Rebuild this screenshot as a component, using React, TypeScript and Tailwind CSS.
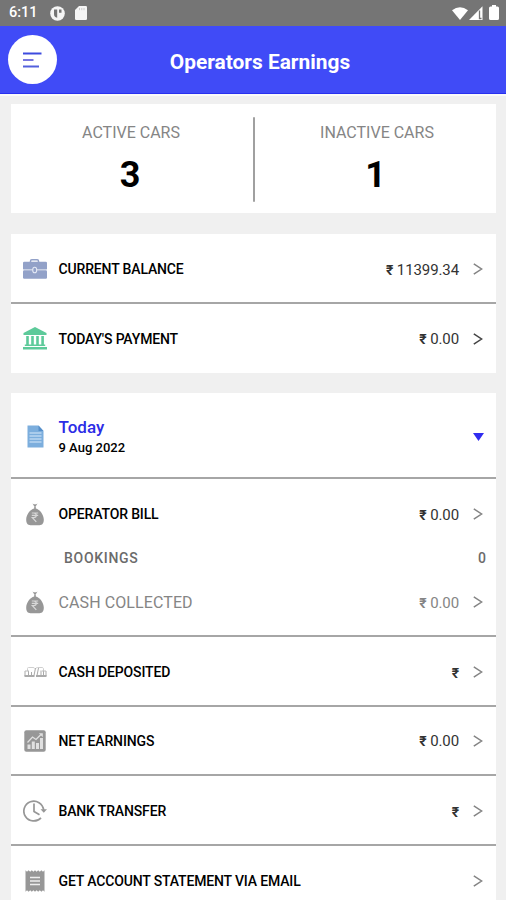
import type { ReactNode } from "react";

function Chevron({ dark = false }: { dark?: boolean }) {
  return (
    <svg
      className={dark ? "ml-[14px] h-3 w-[10px] text-[#444]" : "ml-[14px] h-3 w-[10px] text-[#848484]"}
      viewBox="0 0 10 12"
      fill="none"
      stroke="currentColor"
      strokeWidth="1.5"
    >
      <path d="M0.8 0.8 8.6 6 0.8 11.2" />
    </svg>
  );
}

function Briefcase() {
  return (
    <svg className="h-5 w-6" viewBox="0 0 24 20" fill="#92a1c8">
      <path d="M7.5 3.5V2.2Q7.5.8 8.8.8h5.4q1.3 0 1.3 1.4v1.3" fill="none" stroke="#92a1c8" strokeWidth="1.5" />
      <rect y="2.8" width="24" height="7.8" rx="1.2" />
      <rect y="11.3" width="24" height="8.5" rx="1.2" />
      <ellipse cx="11.7" cy="11" rx="2" ry="2.8" fill="#92a1c8" stroke="#e4e9f5" strokeWidth="1.1" />
    </svg>
  );
}

function Bank() {
  return (
    <svg className="h-[23px] w-6" viewBox="0 0 24 23" fill="#5dca9a">
      <path d="M12 0 23.5 6v1.9H.5V6z" />
      <path d="M3.2 9h2.6v9H3.200zM8.200 9h2.600v9H8.200zM13.200 9h2.600v9h-2.600zM18.300 9h2.600v9h-2.600zM1.800 17.600h20.400V19H1.800zM0 20h24v2.600H0z" />
    </svg>
  );
}

function Doc() {
  return (
    <svg className="h-[23px] w-[17px]" viewBox="0 0 17 23">
      <path d="M.5.5h11l5 5.600v16.400H.5z" fill="#7caedd" />
      <path d="M11.500.5v5.600h5z" fill="#568fca" />
      <path d="M2.500 8h12M2.500 11h12M2.500 14h12M2.500 17h12" stroke="#b9d6f1" strokeWidth="1.300" />
    </svg>
  );
}

function MoneyBag() {
  return (
    <svg className="h-[23px] w-[18px]" viewBox="0 0 18 23" fill="#979797">
      <path d="M6.500.5 8.200 1.400 9 .9l.8.5 1.700-.9L9.700 3.600H8.300z" />
      <path d="M8.200 3.400h1.600v2c4 .9 8 6.200 8 11.200 0 4-1.500 5.700-4.300 5.700h-9C1.700 22.300.2 20.600.2 16.600.2 11.600 4.200 6.300 8.200 5.400z" />
      <path d="M5.800 10h6.400M5.800 12.400h6.400M6.300 10h1.300c3.600 0 3.600 4.600 0 4.600H6.300l4 4.200" fill="none" stroke="#d8d8d8" strokeWidth="1.200" />
    </svg>
  );
}

function Sofa() {
  return (
    <svg className="h-[11px] w-[23px]" viewBox="0 0 23 11" fill="none" stroke="#aaa" strokeWidth="1">
      <path d="M3.500 4V1.500q0-1 1-1h4.500q1.500 0 1.500 1M12 1.500q0-1 1.500-1h4.500q1 0 1.500 1V4" stroke="#cfcfcf" />
      <path d="M1 4v5M4.500 4v4.500M7.500 8.500V5M10 8.500 11.500 1M13 8.500 14.500 1M17 8.500V3.500M19.500 8.500V4M22 4v5" />
      <path d="M.5 9h10M12 9h10.500" strokeWidth="2.200" />
      <path d="M1 4h4M18 4h4" stroke="#bbb" />
    </svg>
  );
}

function Chart() {
  return (
    <svg className="h-[22px] w-[22px]" viewBox="0 0 22 22">
      <rect x=".3" y=".3" width="21.400" height="21.400" rx="2" fill="#979797" />
      <path d="M3.500 14.500h3V19h-3zM7.800 11.500h3V19h-3zM12 13h3v6h-3zM16 8h3v11h-3z" fill="#e0e0e0" />
      <path d="m3.500 12.500 5-5.500 3.500 2.500 5-5" fill="none" stroke="#e0e0e0" strokeWidth="1.300" />
      <path d="M14.800 3.200h4v4z" fill="#e0e0e0" />
    </svg>
  );
}

function Clock() {
  return (
    <svg className="h-[22px] w-6" viewBox="0 0 24 22" fill="none" stroke="#979797" strokeWidth="1.700">
      <path d="M20.600 10A9.900 9.900 0 1 0 18 17.800M11 3.500v8l5.500 3.200" />
      <path d="M17.500 9.200h6.500l-3.200 3.600z" fill="#979797" stroke="none" />
    </svg>
  );
}

function Receipt() {
  return (
    <svg className="h-[22px] w-5" viewBox="0 0 20 22">
      <path d="M.5.3 2 1.800 3.600.3l1.600 1.500L6.800.3l1.600 1.500L10 .3l1.600 1.500L13.200.3l1.600 1.500L16.400.3 18 1.800 19.500.3v21.400L18 20.200l-1.600 1.500-1.600-1.500-1.600 1.500-1.600-1.500-1.600 1.500-1.600-1.500-1.600 1.500-1.600-1.500-1.600 1.500L2 20.200.5 21.700z" fill="#979797" />
      <path d="M5 7.500h10M5 11h10M5 14.500h10" stroke="#eee" strokeWidth="1.500" />
    </svg>
  );
}

type RowProps = {
  icon: ReactNode;
  label: string;
  labelClass: string;
  amount?: string;
  rupee?: boolean;
  muted?: boolean;
  dark?: boolean;
  className: string;
};

function Row({ icon, label, labelClass, amount, rupee = true, muted, dark, className }: RowProps) {
  return (
    <div className={`flex items-center pl-3 pr-[13px] ${className}`}>
      <div className="flex w-6 shrink-0 justify-center">{icon}</div>
      <div className={`ml-[11.5px] flex-1 whitespace-nowrap ${labelClass}`}>{label}</div>
      <div className={`flex items-baseline pt-[1px] text-[15px] leading-5 ${muted ? "text-[#858585]" : "text-[#333]"}`}>
        {rupee && <span className="text-[14px] font-bold">₹</span>}
        {amount && <span className="ml-[3.5px] tracking-[-0.1px]">{amount}</span>}
      </div>
      <Chevron dark={dark} />
    </div>
  );
}

const line = "border-b-[2px] border-[#a6a6a6]";
const strong = "text-[14px] font-medium text-black leading-5 tracking-[-0.15px]";

export default function App() {
  return (
    <div className="flex h-[900px] w-[506px] flex-col overflow-hidden bg-[#f0f0f0] font-['Roboto','Noto_Sans',sans-serif]">
      <div className="flex h-[26px] shrink-0 items-center bg-[#757575] pl-[9px] pr-[7px] text-white">
        <span className="w-[41px] text-[14.5px] font-medium leading-5">6:11</span>
        <svg className="h-[15px] w-[15px]" viewBox="0 0 15 15">
          <circle cx="7.500" cy="7.500" r="7.300" fill="#f5f5f5" />
          <path d="M4 3.500h3.200v8.300C5 11.500 4 10 4 8zM9 3.500h2.500v3.200H9z" fill="#757575" />
        </svg>
        <svg className="ml-[10px] h-[14px] w-3" viewBox="0 0 12 14">
          <path d="M4 0h6.800Q12 0 12 1.200v11.600q0 1.200-1.200 1.200H1.200Q0 14 0 12.800V4z" fill="#f5f5f5" />
          <path d="M4.500 2v2.200M6.800 2v2.200M9 2v2.200" stroke="#ccc" />
        </svg>
        <div className="flex-1" />
        <svg className="h-[13px] w-4" viewBox="0 0 16 13">
          <path d="M0 3.200Q8-2.600 16 3.200L8 13z" fill="#fff" />
        </svg>
        <svg className="ml-[1px] h-[14px] w-[14px]" viewBox="0 0 14 14">
          <path d="M0 14 13.500.3V14z" fill="#fff" />
          <path d="M10.500 4.500v8h2" fill="none" stroke="#757575" strokeWidth="1.300" />
        </svg>
        <svg className="mb-[2px] ml-[6px] h-[15px] w-[10px]" viewBox="0 0 10 15">
          <path d="M3 0h4v1.500h1.500Q10 1.500 10 3v10.500Q10 15 8.500 15h-7Q0 15 0 13.500V3q0-1.500 1.500-1.500H3z" fill="#fff" />
        </svg>
      </div>

      <header className="grid h-[68px] shrink-0 grid-cols-[65px_1fr_51px] items-center border-b-[1px] border-[#2830ef] bg-[#404bf7]">
        <button className="ml-2 flex h-[49px] w-[49px] items-center justify-center rounded-full bg-white">
          <svg className="h-[18px] w-[19px]" viewBox="0 0 19 18" fill="none" strokeWidth="2">
            <path d="M0 2.500h18.500" stroke="#3d4bdf" />
            <path d="M0 9h10.500" stroke="#7877df" />
            <path d="M0 15.500h16" stroke="#5360dc" />
          </svg>
        </button>
        <h1 className="whitespace-nowrap pt-[4px] text-center text-[20.9px] font-bold leading-6 text-white">Operators Earnings</h1>
      </header>
      <div className="h-[2px] shrink-0 bg-[#fafafa]" />

      <main className="mx-[11px] mt-2 w-[485px]">
        <section className="flex h-[109px] bg-white pt-[13px]">
          <div className="flex w-[242px] flex-col items-center text-center">
            <div className="mt-[6px] pr-[2px] text-[16px] leading-5 text-[#858585]">ACTIVE CARS</div>
            <div className="mt-[10px] pr-1 text-[36px] font-bold leading-[44px] text-black">3</div>
          </div>
          <div className="h-[85px] w-[2px] rounded-full bg-[#a0a0a0]" />
          <div className="flex flex-1 flex-col items-center pl-[3px] text-center">
            <div className="mt-[6px] text-[16px] leading-5 text-[#858585]">INACTIVE CARS</div>
            <div className="mt-[10px] pr-[3px] text-[36px] font-bold leading-[44px] text-black">1</div>
          </div>
        </section>

        <section className="mt-[21px] bg-white">
          <Row className={`h-[70px] pt-[2px] ${line}`} icon={<Briefcase />} label="CURRENT BALANCE" labelClass={strong} amount="11399.34" />
          <Row className="h-[69px]" icon={<Bank />} label="TODAY'S PAYMENT" labelClass={strong} amount="0.00" dark />
        </section>

        <section className="mt-5 bg-white">
          <div className={`flex h-[86px] items-center pl-3 pr-3 ${line}`}>
            <div className="flex w-6 justify-center pt-[2px]"><Doc /></div>
            <div className="ml-[11.5px] flex-1 pt-[4px]">
              <div className="text-[17px] font-medium leading-[22px] text-[#2c2ce6]">Today</div>
              <div className="text-[13px] font-medium leading-5 text-black">9 Aug 2022</div>
            </div>
            <svg className="mt-[3px] h-2 w-[11px]" viewBox="0 0 11 8"><path d="M0 0h11L5.500 8z" fill="#302cf0" /></svg>
          </div>
          <div className={`h-[158px] pt-3 ${line}`}>
            <Row className="h-[46px]" icon={<MoneyBag />} label="OPERATOR BILL" labelClass={strong} amount="0.00" />
            <div className="flex h-[42px] items-center justify-between pl-[53px] pr-[10px] text-[14px] font-medium leading-5 text-[#6b6b6b]">
              <span className="tracking-[0.7px]">BOOKINGS</span>
              <span>0</span>
            </div>
            <Row className="h-[46px]" icon={<MoneyBag />} label="CASH COLLECTED" labelClass="pt-[1px] text-[16px] leading-5 tracking-[0.1px] text-[#858585]" amount="0.00" muted />
          </div>
          <Row className={`h-[70px] pt-[2px] ${line}`} icon={<Sofa />} label="CASH DEPOSITED" labelClass={strong} />
          <Row className={`h-[69px] ${line}`} icon={<Chart />} label="NET EARNINGS" labelClass={strong} amount="0.00" />
          <Row className={`h-[70px] pt-[2px] ${line}`} icon={<Clock />} label="BANK TRANSFER" labelClass={strong} />
          <Row className="h-[70px]" icon={<Receipt />} label="GET ACCOUNT STATEMENT VIA EMAIL" labelClass={strong} rupee={false} />
        </section>
      </main>
    </div>
  );
}
